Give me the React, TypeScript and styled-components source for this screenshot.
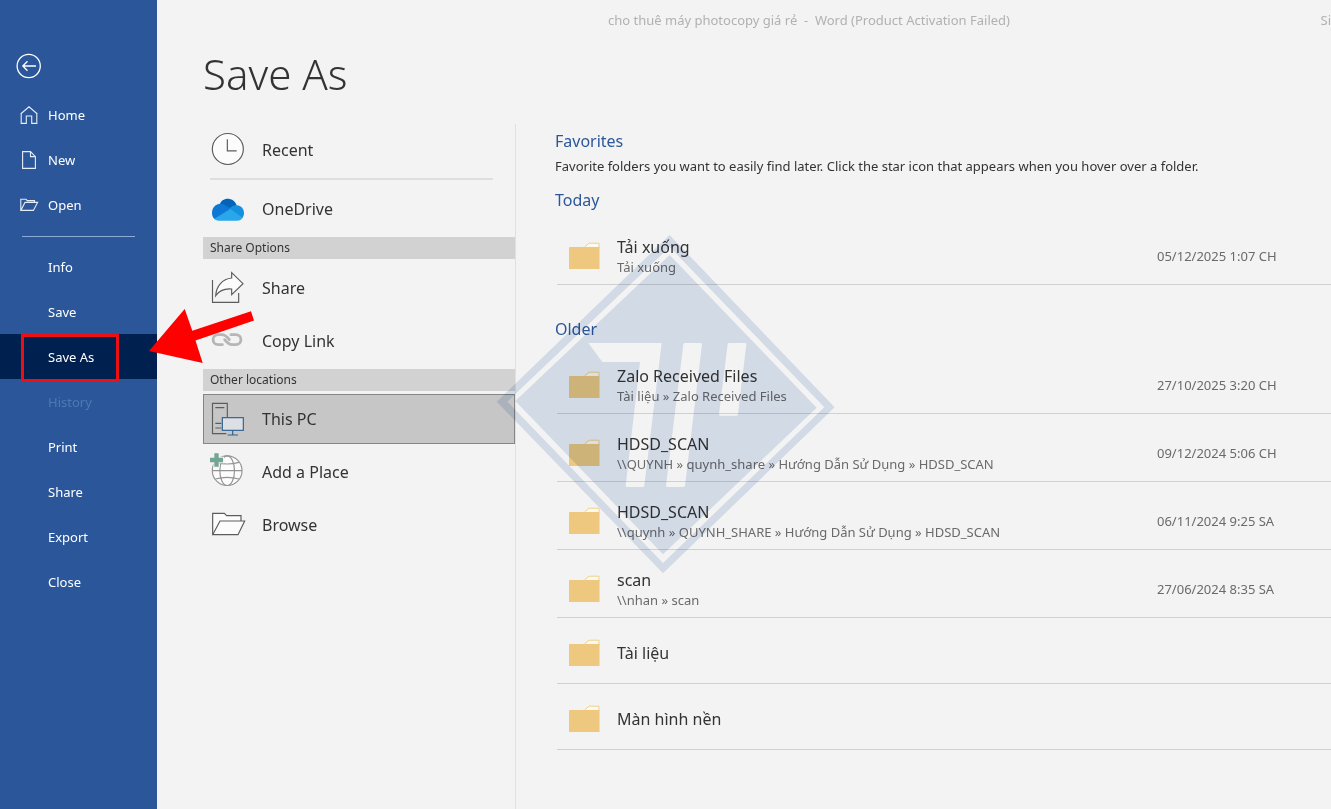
import React from 'react';
import styled, { createGlobalStyle } from 'styled-components';

const Global = createGlobalStyle`
  * { box-sizing: border-box; }
  body { margin: 0; background: #f3f3f3; font-family: "Noto Sans", "Open Sans", sans-serif; color: #333; overflow-x: hidden; }
  button { font: inherit; color: inherit; background: none; border: 0; padding: 0; text-align: left; cursor: pointer; }
  h1, h2, p, ul { margin: 0; padding: 0; font-weight: 400; }
  ul { list-style: none; }
  svg { display: block; overflow: visible; }
`;

const Page = styled.div`
  position: relative;
  display: flex;
  min-height: 100vh;
  overflow: hidden;
`;

const Sidebar = styled.nav`
  flex: 0 0 157px;
  background: #2b579a;
  color: #fff;
  padding-top: 40px;
`;

const BackButton = styled.button`
  display: flex;
  align-items: center;
  height: 52px;
  padding-left: 16px;
`;

const NavButton = styled.button<{ $active?: boolean }>`
  display: grid;
  grid-template-columns: 28px 1fr;
  align-items: center;
  width: 100%;
  height: 45px;
  padding-left: 20px;
  font-size: 13px;
  background: ${(p) => (p.$active ? '#002050' : 'transparent')};
  &:disabled { color: #4c78b3; cursor: default; }
  span { grid-column: 2; }
`;

const NavRule = styled.hr`
  margin: 9px 22px 7px;
  border: 0;
  border-top: 1px solid #8fabd3;
`;

const Main = styled.main`
  flex: 1;
  min-width: 0;
  display: flex;
  flex-direction: column;
`;

const TitleBar = styled.header`
  display: flex;
  justify-content: space-between;
  height: 40px;
  line-height: 40px;
  padding-left: 451px;
  font-size: 13px;
  color: #b1b1b1;
  white-space: pre;
`;

const Title = styled.h1`
  height: 84px;
  padding-left: 46px;
  font-size: 42px;
  line-height: 68px;
  font-weight: 300;
`;

const Columns = styled.div`
  flex: 1;
  display: flex;
`;

const Places = styled.section`
  flex: 0 0 359px;
  padding-left: 46px;
  border-right: 1px solid #e0e0e0;
`;

const PlaceButton = styled.button<{ $selected?: boolean }>`
  display: grid;
  grid-template-columns: 51px 1fr;
  align-items: center;
  width: 100%;
  height: ${(p) => (p.$selected ? 50 : 52)}px;
  margin-bottom: ${(p) => (p.$selected ? 2 : 1)}px;
  padding-left: ${(p) => (p.$selected ? 7 : 8)}px;
  font-size: 16px;
  background: ${(p) => (p.$selected ? '#c6c6c6' : 'transparent')};
  border: ${(p) => (p.$selected ? '1px solid #868686' : '0')};
`;

const PlaceRule = styled.hr`
  margin: 2px 22px 3px 7px;
  border: 0;
  border-top: 2px solid #dedede;
`;

const GroupLabel = styled.h2`
  height: 22px;
  line-height: 22px;
  margin: 2px 0 3px;
  padding-left: 7px;
  font-size: 12px;
  background: #d2d2d2;
`;

const Folders = styled.section`
  flex: 1;
  min-width: 0;
  padding: 5px 0 0 39px;
`;

const Heading = styled.h2`
  font-size: 16px;
  line-height: 24px;
  color: #2b579a;
`;

const Hint = styled.p`
  font-size: 13px;
  line-height: 26px;
  margin-bottom: 9px;
`;

const List = styled.ul`
  margin: 5px 0 32px 2px;
`;

const FolderRow = styled.li<{ $compact: boolean }>`
  height: ${(p) => (p.$compact ? 66 : 68)}px;
  padding-top: ${(p) => (p.$compact ? 4 : 10)}px;
  border-bottom: 1px solid #d0d0d0;
`;

const FolderButton = styled.button`
  display: grid;
  grid-template-columns: 48px 1fr 174px;
  align-items: center;
  width: 100%;
  height: 100%;
  padding-left: 12px;
  font-size: 13px;
  color: #6a6a6a;
`;

const Name = styled.div`
  font-size: 16px;
  line-height: 22px;
  color: #333;
`;

const Path = styled.div`
  line-height: 18px;
`;

const Watermark = styled.svg`
  position: absolute;
  left: 490px;
  top: 225px;
  pointer-events: none;
  mix-blend-mode: multiply;
`;

const Pointer = styled.svg`
  position: absolute;
  left: 0;
  top: 300px;
  pointer-events: none;
`;

const NavGlyph = ({ d }: { d: string }) => (
  <svg width="18" height="18" viewBox="0 0 18 18" fill="none" stroke="#e6edf7" strokeWidth="1.1">
    <path d={d} />
  </svg>
);

const navIcons: Record<string, string> = {
  Home: 'M.6 8 9 .8l8.400 7.200M1.200 7.500V17.400H6.300V10H11.700V17.400H16.800V7.500',
  New: 'M2.600 .6H10.500L15.400 5.600V17.400H2.600ZM10.500 .6V5.600H15.400',
  Open: 'M.8 14.400V3.200H6L7.200 4.600H14.500V6.400M.8 14.400 5 6.400H17.600L13.400 14.400Z',
};

const FolderIcon = () => (
  <svg width="31" height="28" viewBox="0 0 31 28">
    <path d="M15.500 5 20 1.200H30V6H15.500Z" fill="#fffaf0" stroke="#f0cf8d" />
    <path d="M0 6Q0 5 1 5H30.500V27H0Z" fill="#eec87f" />
  </svg>
);

const PlaceIcon = ({ top, children }: { top: number; children: React.ReactNode }) => (
  <svg width="34" height="34" viewBox={`48 ${top} 102 102`} fill="none" stroke="#5c5c5c" strokeWidth="3.500">
    {children}
  </svg>
);

const placeIcons: Record<string, React.ReactNode> = {
  Recent: (
    <PlaceIcon top={39}>
      <circle cx="98.500" cy="87" r="46.500" fill="#fcfcfc" />
      <path d="M97 58V92.500H125" />
    </PlaceIcon>
  ),
  OneDrive: (
    <PlaceIcon top={214}>
      <g stroke="none">
        <path d="M75 250C80 236 94 233 104 235C115 237 122 245 125 254L105 268Z" fill="#0364b8" />
        <path d="M51 277C51 262 60 250 76 249C84 249 92 254 100 260L128 272L60 296C54 292 51 285 51 277Z" fill="#0f78d4" />
        <path d="M104 263C112 255 118 253 126 254C138 255 147 264 147 277C147 283 145 288 142 292L100 275Z" fill="#1490df" />
        <path d="M58 294L106 265L143 291C139 297 134 300 127 300H74C67 300 62 298 58 294Z" fill="#28a8ea" />
      </g>
    </PlaceIcon>
  ),
  Share: (
    <PlaceIcon top={453}>
      <path d="M52.500 480V547H131V519" />
      <path d="M110 458 144 491 110 524V507C88 505 74 510 62 527C64 498 82 477 110 474Z" fill="#fcfcfc" />
    </PlaceIcon>
  ),
  'Copy Link': (
    <PlaceIcon top={612}>
      <g stroke="#b7b5b8" strokeWidth="8.500" strokeLinecap="round">
        <path d="M82 674H70C49 674 49 644 70 644H80C90 644 96 650 103 659" />
        <path d="M108 644H122C143 644 143 674 122 674H112C102 674 96 668 89 659" />
      </g>
    </PlaceIcon>
  ),
  'This PC': (
    <PlaceIcon top={246}>
      <path d="M97 291V250H52.500V341H94" />
      <path d="M61 263H88M61 310H79M61 324H79" />
      <g stroke="#2f6290">
        <rect x="82" y="293" width="63" height="38" fill="#dce0e4" />
        <path d="M113 331V344M98 345H129" />
      </g>
    </PlaceIcon>
  ),
  'Add a Place': (
    <PlaceIcon top={405}>
      <g stroke="#949494">
        <circle cx="96.500" cy="452" r="44.500" fill="#fcfcfc" />
        <ellipse cx="96.500" cy="452" rx="22" ry="44.500" />
        <path d="M52 452H141M61 427Q96 437 132 427M61 477Q96 467 132 477" />
      </g>
      <path d="M55 398H74V410H87V430H74V443H55V430H42V410H55Z" fill="#f3f3f3" stroke="none" />
      <path d="M58 400H71V413H84V427H71V440H58V427H45V413H58Z" fill="#72a594" stroke="none" />
    </PlaceIcon>
  ),
  Browse: (
    <PlaceIcon top={564}>
      <path d="M53 644V580H88L95 587H138V603" fill="#fcfcfc" />
      <path d="M53 644 75 603H149L129 644Z" fill="#fcfcfc" />
    </PlaceIcon>
  ),
};

const NavItem = ({ label, active, disabled }: { label: string; active?: boolean; disabled?: boolean }) => (
  <NavButton $active={active} disabled={disabled}>
    {navIcons[label] && <NavGlyph d={navIcons[label]} />}
    <span>{label}</span>
  </NavButton>
);

const Place = ({ label, selected }: { label: string; selected?: boolean }) => (
  <PlaceButton $selected={selected}>
    {placeIcons[label]}
    <span>{label}</span>
  </PlaceButton>
);

type FolderData = { name: string; path?: string; date?: string };

const today: FolderData[] = [{ name: 'Tải xuống', path: 'Tải xuống', date: '05/12/2025 1:07 CH' }];

const older: FolderData[] = [
  { name: 'Zalo Received Files', path: 'Tài liệu » Zalo Received Files', date: '27/10/2025 3:20 CH' },
  { name: 'HDSD_SCAN', path: '\\\\QUYNH » quynh_share » Hướng Dẫn Sử Dụng » HDSD_SCAN', date: '09/12/2024 5:06 CH' },
  { name: 'HDSD_SCAN', path: '\\\\quynh » QUYNH_SHARE » Hướng Dẫn Sử Dụng » HDSD_SCAN', date: '06/11/2024 9:25 SA' },
  { name: 'scan', path: '\\\\nhan » scan', date: '27/06/2024 8:35 SA' },
  { name: 'Tài liệu' },
  { name: 'Màn hình nền' },
];

const FolderList = ({ items }: { items: FolderData[] }) => (
  <List>
    {items.map((f, i) => (
      <FolderRow key={i} $compact={!f.path}>
        <FolderButton>
          <FolderIcon />
          <div>
            <Name>{f.name}</Name>
            {f.path && <Path>{f.path}</Path>}
          </div>
          <span>{f.date}</span>
        </FolderButton>
      </FolderRow>
    ))}
  </List>
);

const strokes =
  'M295 354H515L463 782Q462 786 458 786H411Q407 786 407 782L450 411H337Z' +
  'M585 354H632Q636 354 636 358L585 782Q584 786 580 786H532Q528 786 528 782L580 358Q581 354 585 354Z' +
  'M718 354H765Q769 354 769 358L744 568Q743 572 739 572H691Q687 572 687 568L713 358Q714 354 718 354Z';

export default function App() {
  return (
    <Page>
      <Global />
      <Sidebar>
        <BackButton aria-label="Back">
          <svg width="26" height="26" viewBox="0 0 26 26" fill="none" stroke="#fff" strokeWidth="1.300">
            <circle cx="12.700" cy="13" r="11.600" />
            <path d="M20 13H7M11.500 8.200 6.800 13 11.500 17.800" />
          </svg>
        </BackButton>
        <NavItem label="Home" />
        <NavItem label="New" />
        <NavItem label="Open" />
        <NavRule />
        <NavItem label="Info" />
        <NavItem label="Save" />
        <NavItem label="Save As" active />
        <NavItem label="History" disabled />
        <NavItem label="Print" />
        <NavItem label="Share" />
        <NavItem label="Export" />
        <NavItem label="Close" />
      </Sidebar>
      <Main>
        <TitleBar>
          <span>{'cho thuê máy photocopy giá rẻ  -  Word (Product Activation Failed)'}</span>
          <span>Si</span>
        </TitleBar>
        <Title>Save As</Title>
        <Columns>
          <Places>
            <Place label="Recent" />
            <PlaceRule />
            <Place label="OneDrive" />
            <GroupLabel>Share Options</GroupLabel>
            <Place label="Share" />
            <Place label="Copy Link" />
            <GroupLabel>Other locations</GroupLabel>
            <Place label="This PC" selected />
            <Place label="Add a Place" />
            <Place label="Browse" />
          </Places>
          <Folders>
            <Heading>Favorites</Heading>
            <Hint>
              Favorite folders you want to easily find later. Click the star icon that appears when you hover over a folder.
            </Hint>
            <Heading>Today</Heading>
            <FolderList items={today} />
            <Heading>Older</Heading>
            <FolderList items={older} />
          </Folders>
        </Columns>
      </Main>
      <Watermark width="350" height="355" viewBox="0 0 1050 1065" fill="#dde5f1" fillRule="evenodd" aria-hidden="true">
        <path d="M539 30 1034 547 519 1045 20 530ZM539 66 1003 547 519 1014 52 530Z" />
        <path d={`M539 90 980 548 519 988 76 528Z${strokes}`} />
      </Watermark>
      <Pointer width="260" height="90" viewBox="0 300 260 90" aria-hidden="true">
        <rect x="22.500" y="335.500" width="95" height="45" fill="none" stroke="#ee0f14" strokeWidth="3" />
        <path d="M149 351 184.700 309 192.300 330.700 251 311.300 254 320.500 195.500 340.500 202.700 363Z" fill="#f00" />
      </Pointer>
    </Page>
  );
}
